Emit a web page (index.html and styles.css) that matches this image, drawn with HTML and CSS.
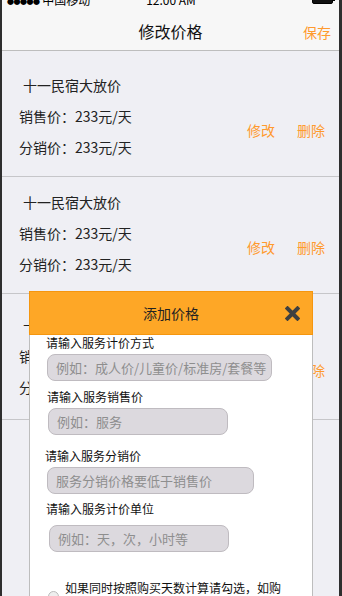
FILE: index.html
```html
<!DOCTYPE html>
<html lang="zh-CN">
<head>
  <meta charset="UTF-8" />
  <meta name="viewport" content="width=device-width, initial-scale=1.0"/>
  <title>修改价格</title>
  <link rel="stylesheet" href="styles.css">
</head>
<body>

  <div class="phone">

    <!-- Status bar (top half cut off) -->
    <div class="status-bar">
      <div class="carrier"><span class="dots">●●●●●</span> 中国移动</div>
      <div class="clock">12:00 AM</div>
      <div class="battery"><span class="battery-body"></span><span class="battery-tip"></span></div>
    </div>

    <!-- Navigation -->
    <header class="nav">
      <h1>修改价格</h1>
      <a class="nav-save">保存</a>
    </header>

    <!-- Price list -->
    <div class="price-list">
      <div class="price-row">
        <div class="price-title">十一民宿大放价</div>
        <div class="price-body">
          <div class="price-lines">
            <div>销售价：233元/天</div>
            <div>分销价：233元/天</div>
          </div>
          <div class="price-actions">
            <a>修改</a>
            <a>删除</a>
          </div>
        </div>
      </div>
      <div class="price-row">
        <div class="price-title">十一民宿大放价</div>
        <div class="price-body">
          <div class="price-lines">
            <div>销售价：233元/天</div>
            <div>分销价：233元/天</div>
          </div>
          <div class="price-actions">
            <a>修改</a>
            <a>删除</a>
          </div>
        </div>
      </div>
      <div class="price-row last">
        <div class="price-title">十一民宿大放价</div>
        <div class="price-body">
          <div class="price-lines">
            <div>销售价：233元/天</div>
            <div>分销价：233元/天</div>
          </div>
          <div class="price-actions">
            <a>修改</a>
            <a>删除</a>
          </div>
        </div>
      </div>
    </div>

    <!-- Add price dialog -->
    <div class="dialog">
      <div class="dialog-head">
        <span>添加价格</span>
        <svg class="dialog-close" width="15" height="15" viewBox="0 0 15 15">
          <path d="M2.5 2.5 L12.5 12.5 M12.5 2.5 L2.5 12.5" stroke="#404040" stroke-width="4" stroke-linecap="square"/>
        </svg>
      </div>
      <div class="dialog-body">
        <label class="field-label l1">请输入服务计价方式</label>
        <input class="field-input w-lg i1" placeholder="例如：成人价/儿童价/标准房/套餐等">

        <label class="field-label l2">请输入服务销售价</label>
        <input class="field-input w-sm i2" placeholder="例如：服务">

        <label class="field-label l3">请输入服务分销价</label>
        <input class="field-input w-md i3" placeholder="服务分销价格要低于销售价">

        <label class="field-label l4">请输入服务计价单位</label>
        <input class="field-input w-sm i4" placeholder="例如：天，次，小时等">

        <div class="check-row">
          <span class="radio"></span>
          <p class="check-text">如果同时按照购买天数计算请勾选，如购买3天，总价为单价乘以天数</p>
        </div>
      </div>
    </div>

  </div>

</body>
</html>
```

FILE: styles.css
```css
* {
  box-sizing: border-box;
}

body {
  margin: 0;
  font-family: "Noto Sans CJK SC", "Liberation Sans", sans-serif;
  color: #222;
}

.phone {
  position: relative;
  width: 342px;
  height: 596px;
  overflow: hidden;
  background-color: #efeff4;
  border-left: 2px solid #2e2e2e;
  border-right: 3px solid #2e2e2e;
}

/* Status bar */
.status-bar {
  display: grid;
  grid-template-columns: 1fr auto 1fr;
  align-items: center;
  height: 20px;
  margin-top: -11px;
  padding: 0 4px 0 5px;
  font-size: 12px;
  color: #000;
  background-color: #f7f7f7;
}

.dots {
  font-size: 7px;
  letter-spacing: -0.5px;
  vertical-align: 1px;
}

.battery {
  display: flex;
  justify-content: flex-end;
  align-items: center;
}

.battery-body {
  width: 21px;
  height: 10px;
  border: 1px solid #000;
  border-radius: 2px;
  background-color: #111;
}

.battery-tip {
  width: 2px;
  height: 4px;
  background-color: #000;
}

/* Navigation */
.nav {
  position: relative;
  display: flex;
  justify-content: center;
  align-items: center;
  height: 42px;
  padding-top: 2px;
  background-color: #f7f7f7;
  border-bottom: 1px solid #bdbdbd;
}

.nav h1 {
  margin: 0;
  font-size: 16px;
  font-weight: normal;
  color: #111;
}

.nav-save {
  position: absolute;
  right: 8px;
  top: 13px;
  font-size: 14px;
  color: #ff9a2e;
}

/* Price list */
.price-list {
  padding-top: 9px;
}

.price-row {
  padding: 10px 14px 13px 17px;
  border-bottom: 1px solid #c6c6c9;
  font-size: 14px;
  line-height: 31px;
}

.price-row.last {
  padding-top: 16px;
  padding-bottom: 16px;
}

.price-title {
  padding-left: 4px;
}

.price-body {
  display: flex;
  justify-content: space-between;
  align-items: center;
}

.price-actions {
  display: flex;
  gap: 22px;
  margin-top: -4px;
}

.price-actions a {
  color: #ff9a2e;
}

/* Dialog */
.dialog {
  position: absolute;
  left: 27px;
  top: 291px;
  width: 284px;
  height: 330px;
}

.dialog-head {
  position: relative;
  display: flex;
  justify-content: center;
  align-items: center;
  height: 44px;
  background-color: #fea726;
  border: 1px solid #f5960f;
  font-size: 14px;
  color: #222;
}

.dialog-close {
  position: absolute;
  right: 12px;
  top: 14px;
}

.dialog-body {
  height: 286px;
  padding-left: 16px;
  background-color: #fff;
  border-left: 1px solid #bdbdbd;
  border-right: 1px solid #bdbdbd;
}

.field-label {
  display: block;
  font-size: 12px;
  line-height: 15px;
  color: #111;
}

.field-input {
  display: block;
  height: 27px;
  padding: 0 0 0 8px;
  font-family: inherit;
  font-size: 13px;
  background-color: #dcd9de;
  border: 1px solid #bfbbc0;
  border-radius: 8px;
  outline: none;
}

.field-input::placeholder {
  color: #8e8e8e;
}

.w-lg { width: 225px; }
.w-md { width: 207px; }
.w-sm { width: 180px; }

.l1 { margin-top: 0; }
.i1 { margin-top: 4px; margin-left: 1px; }
.l2 { margin-top: 8px; margin-left: 1px; }
.i2 { margin-top: 4px; margin-left: 2px; }
.l3 { margin-top: 13px; margin-left: -1px; }
.i3 { margin-top: 4px; margin-left: 1px; }
.l4 { margin-top: 7px; }
.i4 { margin-top: 9px; margin-left: 3px; }

.check-row {
  position: relative;
  margin-top: 28px;
  padding-left: 19px;
  padding-right: 20px;
}

.check-text {
  margin: 0;
  font-size: 12px;
  line-height: 15px;
  color: #111;
}

.radio {
  position: absolute;
  left: 2px;
  top: 11px;
  width: 11px;
  height: 11px;
  border: 1px solid #bbb;
  border-radius: 50%;
  background-color: #eee;
}
```
